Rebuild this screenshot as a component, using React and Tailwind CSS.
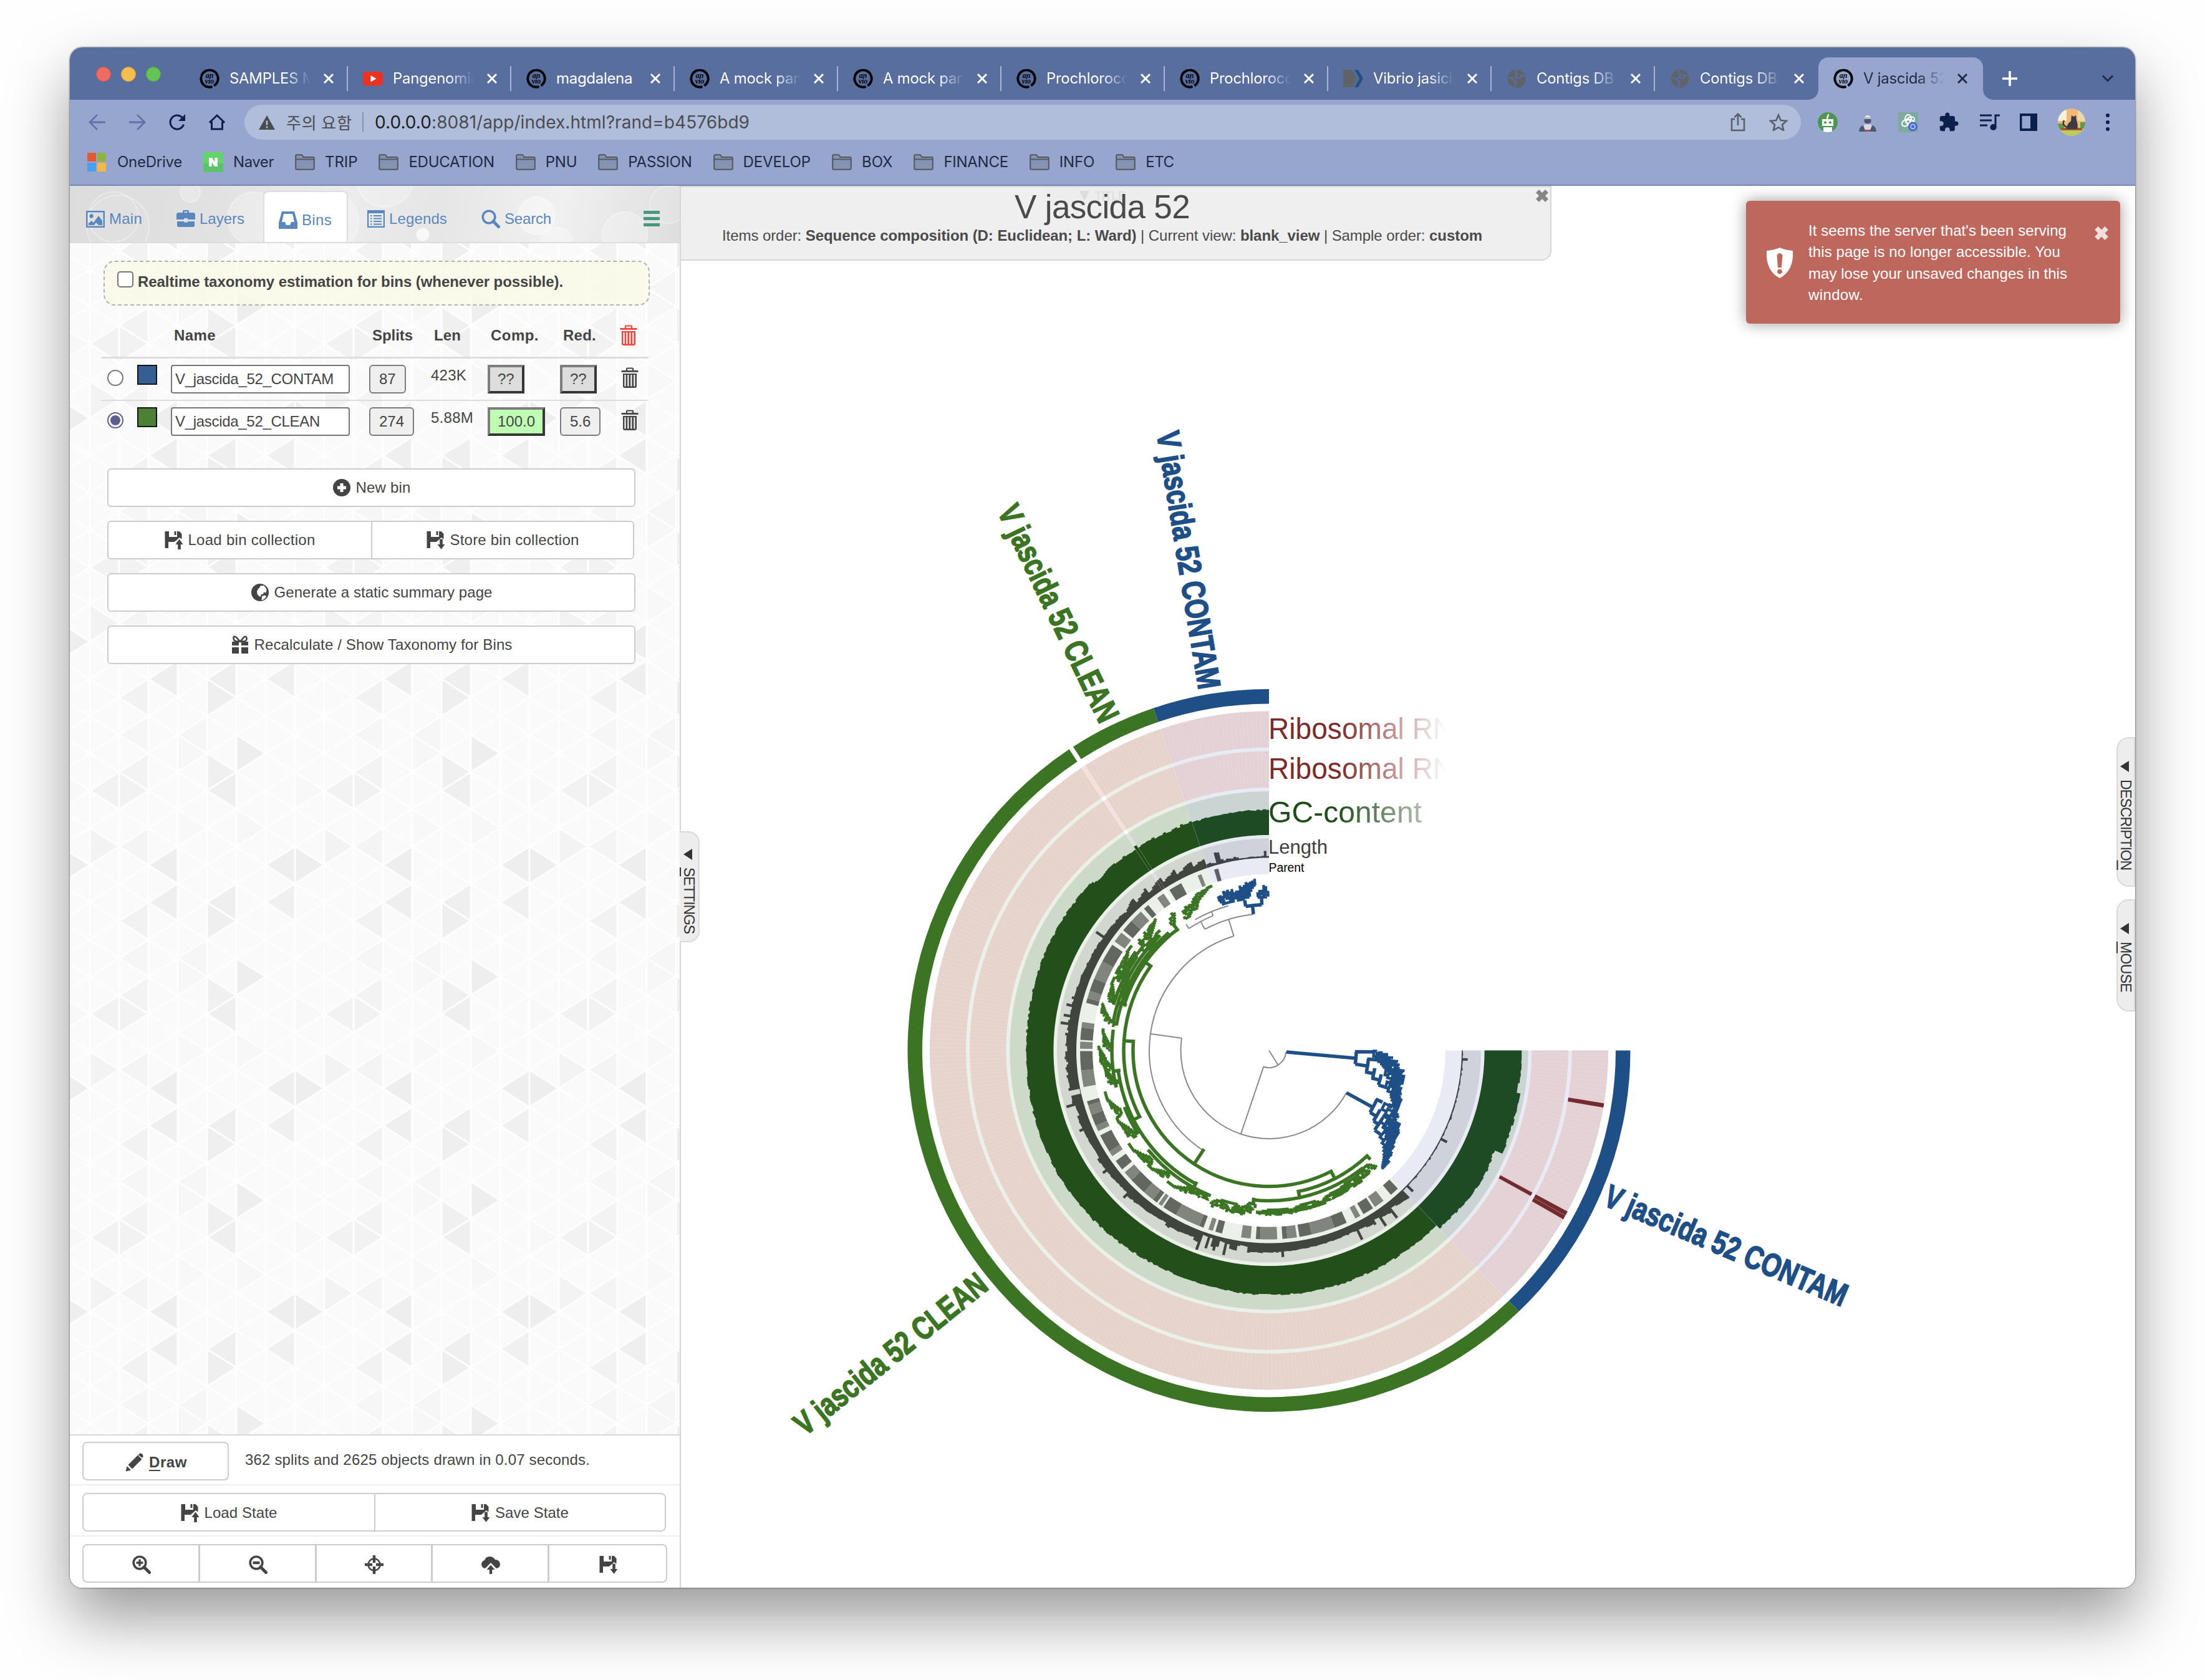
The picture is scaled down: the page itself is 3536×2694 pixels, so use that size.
import React, { useLayoutEffect, useRef } from "react";

/* Text whose letter spacing is computed so that it fills a given width */
function Fit({ w, className = "", children }) {
  const ref = useRef(null);
  useLayoutEffect(() => {
    const el = ref.current;
    el.style.letterSpacing = "0px";
    const n = el.textContent.length;
    const natural = el.getBoundingClientRect().width;
    el.style.letterSpacing = (w - natural) / n + "px";
  }, [w]);
  return (
    <span ref={ref} className={"inline-block whitespace-pre " + className}>
      {children}
    </span>
  );
}

/* ---------- icons ---------- */
const Svg = ({ children, className = "w-[30px] h-[30px]", vb = "0 0 30 30" }) => (
  <svg viewBox={vb} className={"shrink-0 " + className} fill="currentColor">
    {children}
  </svg>
);
const IcPicture = () => (
  <Svg>
    <path fillRule="evenodd" d="M0 2h30v27H0zM2.5 4.5v22h25v-22z" />
    <circle cx="8.5" cy="10.5" r="3.2" />
    <path d="M4 25v-3l5-4 3 3 8-11 6 8v7h-6l-4-4-3 4z" />
  </Svg>
);
const IcBriefcase = () => (
  <Svg>
    <path fillRule="evenodd" d="M10 5V2.5Q10 1 11.500 1h7Q20 1 20 2.500V5h7.500Q30 5.500 30 8v8H18v-2h-6v2H0V8q0-2.500 2.500-3zM12.500 5h5V3.200h-5zM1 19h11v1.500h6V19h11v7q0 2-2.500 2h-23Q1 28 1 26z" />
  </Svg>
);
const IcInbox = () => (
  <Svg>
    <path fillRule="evenodd" d="M5 1h20l5 18v10H0V19zM8 5L5 18h5l2 5h6l2-5h5L22 5z" />
  </Svg>
);
const IcList = () => (
  <Svg className="w-[28px] h-[30px]" vb="0 0 28 30">
    <path fillRule="evenodd" d="M0 1h28v28H0zM2.200 6v20.800h23.600V6z" />
    <path d="M5 9h2.500v2H5zM10 9h13v2H10zM5 13.500h2.500v2H5zM10 13.500h13v2H10zM5 18h2.500v2H5zM10 18h13v2H10zM5 22.500h2.500v2H5zM10 22.500h13v2H10z" />
  </Svg>
);
const Lens = ({ children }) => (
  <Svg>
    <circle cx="12" cy="12" r="9.800" fill="none" stroke="currentColor" strokeWidth="3.600" />
    <path d="M19 19l8.500 8.500" stroke="currentColor" strokeWidth="5" strokeLinecap="square" fill="none" />
    {children}
  </Svg>
);
const IcTrash = () => (
  <Svg className="w-[28px] h-[34px]" vb="0 0 28 34">
    <path d="M9 5V2.500Q9 1.500 10 1.500h8Q19 1.500 19 2.500V5" fill="none" stroke="currentColor" strokeWidth="2.200" />
    <path d="M0.500 5h27v2.800H0.500z" />
    <path fillRule="evenodd" d="M3 10h22v20q0 3-3 3H6q-3 0-3-3zM5.400 12v18.500h2.200V12zM10.200 12v18.500h2.200V12zM15.200 12v18.500h2.200V12zM20.200 12v18.500h2.200V12z" />
  </Svg>
);
const IcPlus = () => (
  <Svg>
    <path fillRule="evenodd" d="M15 1a14 14 0 1 0 0 28a14 14 0 1 0 0-28zM12.500 8h5v4.500H22v5h-4.500V22h-5v-4.500H8v-5h4.500z" />
  </Svg>
);
const IcFloppy = ({ down }) => (
  <Svg>
    <path fillRule="evenodd" d="M0.500 1H7v9h13V1h3.500l4 4v8.500l-4-2.500-3.500 3.500-4.500 3.500H6v10H0.500z" />
    <path d="M15.500 1h3v6h-3z" />
    {down ? <path d="M21.200 13.500h4.600V22h3.700l-6 7.800-6-7.800h3.700z" /> : <path d="M21.200 30h4.600v-8h3.700l-6-8.500-6 8.500h3.700z" />}
  </Svg>
);
const IcGlobe = () => (
  <Svg>
    <path fillRule="evenodd" d="M15 1a14 14 0 1 0 0 28a14 14 0 1 0 0-28zM16 4l3.500.5 1-1 3 3 2 4-.5 4-1.500 1-2-1-1.500 3-3.500 1-.5 3-2 0-3-3-1-5 2-4 2-2zM18 21l5-1.500 2 2-3.500 4.500-4 1.500z" />
  </Svg>
);
const IcGift = () => (
  <Svg>
    <path d="M2 10h11v6H2zM17 10h11v6H17zM2 19h11v10H2zM17 19h11v10H17z" />
    <path d="M15 10L9 3Q4 0 4.500 4.500T9 9.500h12q5-.5 4.500-5T21 3z" fill="none" stroke="currentColor" strokeWidth="2.600" />
  </Svg>
);
const IcPencil = () => (
  <Svg>
    <path d="M0.500 29.500l2-8.500 6.500 6.500zM4.500 19L20 3.500l6.500 6.500L11 25.500zM22 1.800q2.500-2.500 5 0t1 5l-1 1L20.500 3z" />
  </Svg>
);
const IcScreenshot = () => (
  <Svg>
    <circle cx="15" cy="15" r="9.500" fill="none" stroke="currentColor" strokeWidth="2.400" />
    <path d="M12.800 0h4.400v12h-4.400zM12.800 18h4.400v12h-4.400zM0 12.800h12v4.400H0zM18 12.800h12v4.400H18z" />
  </Svg>
);
const IcCloud = () => (
  <Svg>
    <path d="M6 21q-6-1-6-7 1-5 5-6Q7 2 13 2t9 5q7 0 8 7 0 6-6 7l-9-9z" />
    <path d="M12.800 31v-8H8.500l6.500-7.500 6.500 7.500h-4.300v8z" />
  </Svg>
);
const IcShield = () => (
  <Svg className="w-[46px] h-[50px]" vb="0 0 46 50">
    <path fillRule="evenodd" d="M23 0q8 4 21 5 2 32-21 44Q0 37 2 5 15 4 23 0zM18.500 12l1.500 20h6l1.500-20q-4.500-6-9 0zM23 34.500a4 4 0 1 0 .01 0z" />
  </Svg>
);
const FatX = ({ className }) => (
  <Svg className={className} vb="0 0 22 22">
    <path d="M3.500 3.500l15 15M18.500 3.500l-15 15" stroke="currentColor" strokeWidth="7" fill="none" />
  </Svg>
);

/* ---------- browser chrome ---------- */
const AnvioIcon = () => (
  <svg viewBox="0 0 32 32" className="h-8 w-8 shrink-0">
    <ellipse cx="16" cy="16" rx="13.500" ry="13.500" fill="none" stroke="#060606" strokeWidth="3.600" strokeDasharray="72 3 9 2" transform="rotate(110 16 16)" />
    <ellipse cx="16" cy="16" rx="15" ry="15" fill="none" stroke="#060606" strokeWidth="1.200" strokeDasharray="14 5 30 3" />
    <text x="16" y="15" textAnchor="middle" fontSize="12" fontWeight="bold" fontStyle="italic" fontFamily="Liberation Serif, serif" fill="#060606">an</text>
    <text x="16" y="24" textAnchor="middle" fontSize="12" fontWeight="bold" fontStyle="italic" fontFamily="Liberation Serif, serif" fill="#060606">vio</text>
  </svg>
);
const YtIcon = () => (
  <svg viewBox="0 0 32 32" className="h-8 w-8 shrink-0">
    <rect y="5" width="32" height="22.500" rx="5" fill="#ea3223" />
    <path d="M12.500 11l9 5.200-9 5.200z" fill="#fff" />
  </svg>
);
const VibIcon = () => (
  <svg viewBox="0 0 32 32" className="h-8 w-8 shrink-0">
    <path d="M0 2h15l8 14-8 14H0z" fill="#5f6368" />
    <path d="M18 2h6l8 14-8 14h-6l8-14z" fill="#20508a" />
  </svg>
);
const GlobeIcon = () => (
  <svg viewBox="0 0 32 32" className="h-8 w-8 shrink-0">
    <circle cx="16" cy="16" r="14.500" fill="#5f6368" />
    <path d="M3 15q5-1 8 2l1 3 3 0 0 4-2 5M15 3q-2 4 1 5t-1 4 3 3 5-3 6 0" fill="none" stroke="#586e9f" strokeWidth="2.600" />
  </svg>
);
const tabs = [
  [AnvioIcon, "SAMPLES M", true],
  [YtIcon, "Pangenomic", true],
  [AnvioIcon, "magdalena", false],
  [AnvioIcon, "A mock pan", true],
  [AnvioIcon, "A mock pan", true],
  [AnvioIcon, "Prochloroco", true],
  [AnvioIcon, "Prochloroco", true],
  [VibIcon, "Vibrio jasicid", true],
  [GlobeIcon, "Contigs DB", true],
  [GlobeIcon, "Contigs DB", true],
];
const CloseX = () => (
  <svg viewBox="0 0 16 16" className="h-4 w-4 shrink-0">
    <path d="M1 1l14 14M15 1L1 15" stroke="currentColor" strokeWidth="3" />
  </svg>
);
function TabStrip() {
  return (
    <div className="flex h-[84px] items-end bg-[#586e9f] text-[24px] text-white">
      <div className="flex h-[84px] w-[184px] items-center gap-4 pl-[42px] pt-[2px]">
        <div className="h-6 w-6 rounded-full border border-[#d3544b] bg-[#ed6b5f]" />
        <div className="h-6 w-6 rounded-full border border-[#d9a13c] bg-[#f5bf4f]" />
        <div className="h-6 w-6 rounded-full border border-[#51a73d] bg-[#62c554]" />
      </div>
      {tabs.map(([Icon, label, fade], i) => (
        <div key={i} className="flex h-[68px] w-[262px] shrink-0 items-center pl-6">
          <Icon />
          <div className={"ml-4 w-[130px] overflow-hidden whitespace-nowrap leading-[34px] tracking-[-0.3px] " + (fade ? "[mask-image:linear-gradient(to_right,#000_68%,transparent_100%)]" : "")}>
            {label}
          </div>
          <div className="ml-[21px]"><CloseX /></div>
          {i < 9 && <div className="ml-auto h-10 w-[2px] bg-[#a9b5d0]" />}
        </div>
      ))}
      <div className="relative flex h-[68px] w-[264px] shrink-0 items-center rounded-t-[16px] bg-[#96a6cf] pl-6 text-[#1f2a44]">
        <div className="absolute -left-4 bottom-0 h-4 w-4 bg-[radial-gradient(circle_at_0_0,#586e9f_15.5px,#96a6cf_16px)]" />
        <div className="absolute -right-4 bottom-0 h-4 w-4 bg-[radial-gradient(circle_at_100%_0,#586e9f_15.5px,#96a6cf_16px)]" />
        <AnvioIcon />
        <div className="ml-4 w-[130px] overflow-hidden whitespace-nowrap leading-[34px] tracking-[-0.3px] [mask-image:linear-gradient(to_right,#000_68%,transparent_100%)]">V jascida 52</div>
        <div className="ml-[21px]"><CloseX /></div>
      </div>
      <div className="flex h-[68px] flex-1 items-center justify-between pl-[31px] pr-[34px]">
        <svg viewBox="0 0 24 24" className="h-6 w-6"><path d="M12 0v24M0 12h24" stroke="#fff" strokeWidth="3.600" /></svg>
        <svg viewBox="0 0 20 12" className="h-3 w-5"><path d="M2 1.500l8 8 8-8" fill="none" stroke="#1f2a44" strokeWidth="3" /></svg>
      </div>
    </div>
  );
}

function Toolbar() {
  return (
    <div className="flex h-[72px] items-center bg-[#96a6cf] text-[#0b1f4b]">
      <div className="flex w-[280px] items-center gap-9 pl-[30px]">
        <svg viewBox="0 0 28 28" className="h-7 w-7" fill="none" stroke="#5f72a5" strokeWidth="2.800"><path d="M27 14H2M14 2L2 14l12 12" /></svg>
        <svg viewBox="0 0 28 28" className="h-7 w-7" fill="none" stroke="#5f72a5" strokeWidth="2.800"><path d="M1 14h25M14 2l12 12-12 12" /></svg>
        <svg viewBox="0 0 28 28" className="h-7 w-7" fill="none" stroke="currentColor" strokeWidth="3"><path d="M24.500 17.500A11 11 0 1 1 22 6.500" /><path d="M27 1v11H16z" fill="currentColor" stroke="none" /></svg>
        <svg viewBox="0 0 28 28" className="h-7 w-7" fill="none" stroke="currentColor" strokeWidth="3"><path d="M5.500 13v12h17V13M2 14.500L14 3l12 11.500M2 14h4M22 14h4" /></svg>
      </div>
      <div className="flex h-[56px] w-[2496px] items-center rounded-full bg-[#b1bedb] text-[28px] text-[#4a4c50]">
        <svg viewBox="0 0 26 23" className="ml-[23px] h-[23px] w-[26px]"><path d="M13 0l13 23H0z" fill="#4a4c50" /><path d="M13 8.500v7M13 17.500v3" stroke="#b1bedb" strokeWidth="2.600" /></svg>
        <Fit w={106} className="ml-[18px] font-['Noto_Sans_CJK_KR',sans-serif] text-[26px] leading-[56px]">주의 요함</Fit>
        <div className="ml-4 h-8 w-[2px] bg-[#8792ac]" />
        <Fit w={601} className="ml-[18px] leading-[56px]"><span className="text-[#1c1d20]">0.0.0.0</span>:8081/app/index.html?rand=b4576bd9</Fit>
        <div className="ml-auto flex items-center gap-9 pr-[21px] text-[#5a5e66]">
          <svg viewBox="0 0 28 30" className="h-[30px] w-7" fill="none" stroke="currentColor" strokeWidth="2.600"><path d="M9 10H4v18h20V10h-5M14 20V2M8.500 7L14 1.800 19.500 7" /></svg>
          <svg viewBox="0 0 30 28" className="h-7 w-[30px]" fill="none" stroke="currentColor" strokeWidth="2.600"><path d="M15 2.500l3.700 8.500 9.300.8-7 6.100 2.100 9.100L15 22.200 6.900 27 9 17.900l-7-6.100 9.300-.8z" /></svg>
        </div>
      </div>
      <div className="flex flex-1 items-center justify-between pl-[27px] pr-[40px]">
        <svg viewBox="0 0 32 32" className="h-8 w-8"><circle cx="16" cy="16" r="16" fill="#4f9552" /><path d="M7 11h18v11H7zM14 11q0-7 4-9 0 5-2 9zM9 24h14v7q-7 2-14 0z" fill="#fff" /><circle cx="12" cy="16.500" r="2" fill="#4f9552" /><circle cx="20" cy="16.500" r="2" fill="#4f9552" /></svg>
        <svg viewBox="0 0 32 32" className="h-8 w-8"><path d="M2 31q1-9 7-10h14q6 1 7 10z" fill="#4b5670" /><path d="M9 21q7-5 14 0l-3 8h-8z" fill="#d5dae4" /><ellipse cx="16" cy="12" rx="6" ry="7.500" fill="#aeb6c8" /><path d="M10.500 11h11v5q-5.500 5-11 0z" fill="#4d5670" /><path d="M11 8q5-6 10 0z" fill="#e8ebf2" /><path d="M12 28h8v3h-8z" fill="#b34a4a" /></svg>
        <svg viewBox="0 0 32 32" className="h-8 w-8"><rect width="32" height="32" rx="3" fill="#7fab9c" /><g fill="none" stroke="#fff" strokeWidth="2"><ellipse cx="16" cy="11" rx="5" ry="7" /><ellipse cx="16" cy="11" rx="5" ry="7" transform="rotate(60 16 15)" /><ellipse cx="16" cy="11" rx="5" ry="7" transform="rotate(120 16 15)" /><ellipse cx="16" cy="11" rx="5" ry="7" transform="rotate(240 16 15)" /></g><circle cx="23.500" cy="23" r="7.500" fill="#4d66d8" /><circle cx="23.500" cy="23" r="3.500" fill="none" stroke="#cdd6ff" strokeWidth="1.500" /></svg>
        <svg viewBox="0 0 24 24" className="h-[34px] w-[34px]" fill="currentColor"><path d="M20.500 11H19V7c0-1.100-.9-2-2-2h-4V3.500C13 2.120 11.880 1 10.500 1S8 2.120 8 3.500V5H4c-1.100 0-1.990.9-1.990 2v3.800H3.500c1.490 0 2.700 1.210 2.700 2.700s-1.210 2.700-2.700 2.700H2V20c0 1.100.9 2 2 2h3.800v-1.500c0-1.490 1.210-2.700 2.700-2.700s2.700 1.210 2.700 2.700V22H17c1.100 0 2-.9 2-2v-4h1.500c1.380 0 2.500-1.120 2.500-2.500S21.880 11 20.500 11z" /></svg>
        <svg viewBox="0 0 32 28" className="h-7 w-8" fill="none" stroke="currentColor" strokeWidth="3"><path d="M0 3h19M0 11h19M0 19h12M25 22V3h7" /><circle cx="21.500" cy="22" r="3.600" fill="currentColor" /></svg>
        <svg viewBox="0 0 28 28" className="h-7 w-7" fill="currentColor"><path fillRule="evenodd" d="M0 0h28v28H0zM3.500 4v20H17V4z" /></svg>
        <svg viewBox="0 0 44 44" className="h-11 w-11"><defs><clipPath id="av"><circle cx="22" cy="22" r="22" /></clipPath></defs><g clipPath="url(#av)"><path d="M0 0h44v44H0z" fill="#f1b877" /><path d="M0 0h14v20H0z" fill="#f7f1dc" /><path d="M32 2h12v18H32z" fill="#e9d8a8" /><path d="M0 32h44v12H0z" fill="#bccb62" /><path d="M0 24h10v10H0zM36 22h8v10h-8z" fill="#5e9c4a" /><path d="M5 31h34v4H5z" fill="#a8562b" /><path d="M14 33q0-8 7-13l1-9 3 2 4-2 1 8q3 8 1 14z" fill="#3c3b43" /><path d="M15 30q-9-3-5-11" fill="none" stroke="#3c3b43" strokeWidth="2.500" /></g></svg>
        <svg viewBox="0 0 8 28" className="h-7 w-2" fill="currentColor"><circle cx="4" cy="3" r="3" /><circle cx="4" cy="14" r="3" /><circle cx="4" cy="25" r="3" /></svg>
      </div>
    </div>
  );
}

const Folder = () => (
  <svg viewBox="0 0 32 26" className="h-[26px] w-8 shrink-0"><path d="M1.200 23V3q0-1.800 2-1.800h7q1.500 0 2 1.500l1 2.300h15.600q2 0 2 2v16q0 1.800-2 1.800H3.200q-2 0-2-1.800z" fill="#8493b3" stroke="#55575a" strokeWidth="2" /><path d="M1 8.500h30" stroke="#55575a" strokeWidth="1.800" /></svg>
);
const bookmarks = [
  ["TRIP", 53], ["EDUCATION", 138], ["PNU", 51], ["PASSION", 103], ["DEVELOP", 109], ["BOX", 50], ["FINANCE", 104], ["INFO", 57], ["ETC", 46],
];
function Bookmarks() {
  return (
    <div className="flex h-[66px] items-start border-b-2 border-[#7287b6] bg-[#96a6cf] text-[24px] text-[#1f2a44]">
      <div className="flex h-[56px] items-center pl-7">
        <svg viewBox="0 0 30 30" className="h-[30px] w-[30px]"><path d="M0 0h14v14H0z" fill="#e25a33" /><path d="M16 0h14v14H16z" fill="#8cb53c" /><path d="M0 16h14v14H0z" fill="#4b9fe8" /><path d="M16 16h14v14H16z" fill="#f4b944" /></svg>
        <Fit w={104} className="ml-[18px]">OneDrive</Fit>
        <svg viewBox="0 0 32 32" className="ml-[34px] h-8 w-8"><rect width="32" height="32" fill="#62d56a" /><rect y="18" width="32" height="14" fill="#56b96c" opacity=".6" /><path d="M9 23V9h5l4.500 7V9H23v14h-5l-4.500-7v7z" fill="#fff" /></svg>
        <Fit w={65} className="ml-4">Naver</Fit>
      </div>
      {bookmarks.map(([t, w]) => (
        <div key={t} className="flex h-[56px] items-center pl-[34px]">
          <Folder />
          <Fit w={w - 0.6} className="ml-4">{t}</Fit>
        </div>
      ))}
    </div>
  );
}

/* ---------- settings panel ---------- */
/* triangles on a half-height grid: [apex column, apex row, direction, fill] */
const HX = 47, HY = 29.85;
const tris = [
  [1, 7, 1, "#f3f3f3"], [1, 7, -1, "#f4f4f4"], [0, 4, -1, "#f2f2f2"], [2, 4, 1, "#f2f2f2"], [1, 3, -1, "#f3f3f3"], [5, 3, 1, "#f0f0f0"], [4, 4, -1, "#efefef"],
  [6, 2, 1, "#eeeeee"], [2, 8, -1, "#eeeeee"], [6, 8, -1, "#eeeeee"], [8, 8, 1, "#eeeeee"], [2, 10, -1, "#efefef"], [4, 10, -1, "#efefef"], [6, 10, -1, "#f0f0f0"],
  [5, 11, 1, "#efefef"], [1, 11, -1, "#f2f2f2"], [1, 1, -1, "#f6f6f6"], [3, 1, -1, "#f6f6f6"], [4, 2, 1, "#f7f7f7"], [6, 6, 1, "#f7f7f7"], [4, 6, 1, "#f8f8f8"], [8, 4, 1, "#f8f8f8"],
];
const PanelPattern = () => {
  let lines = "";
  for (let c = 0; c <= 8; c++) lines += `M${c * HX} 0V${12 * HY}`;
  for (let r = -8; r <= 12; r += 2) lines += `M0 ${r * HY}L${8 * HX} ${(r + 8) * HY}M0 ${(r + 8) * HY}L${8 * HX} ${r * HY}`;
  return (
    <svg className="absolute inset-0 h-full w-full">
      <defs>
        <pattern id="tri" x="32" y="42" width={8 * HX} height={12 * HY} patternUnits="userSpaceOnUse">
          <rect width={8 * HX} height={12 * HY} fill="#fafafa" />
          {tris.map(([c, r, d, f], i) => (
            <path key={i} fill={f} d={`M${c * HX} ${r * HY}L${(c - d) * HX} ${(r - 1) * HY}V${(r + 1) * HY}z`} />
          ))}
          <path d={lines} stroke="#fefefe" strokeWidth="3" fill="none" />
        </pattern>
      </defs>
      <rect width="100%" height="100%" fill="url(#tri)" />
    </svg>
  );
};
const Btn = ({ children, className = "" }) => (
  <div className={"flex items-center justify-center gap-2 border-[#ccc] bg-white " + className}>{children}</div>
);
const NavItem = ({ Icon, t, w, className = "" }) => (
  <div className={"flex items-center gap-[7px] " + className}>
    <Icon />
    <Fit w={w}>{t}</Fit>
  </div>
);

function BinRow({ on, color, name, nw, splits, len, lw, comp, red }) {
  return (
    <div className="grid h-[66px] grid-cols-[58px_54px_318px_99px_91px_116px_98px_44px] items-start pt-[10px]">
      <div className={"ml-[10px] mt-2 flex h-[26px] w-[26px] items-center justify-center rounded-full border-2 bg-white " + (on ? "border-[#5b5f8d]" : "border-[#767676]")}>
        {on && <div className="h-4 w-4 rounded-full bg-[#5b5f8d]" />}
      </div>
      <div className={"h-8 w-8 border-2 border-[#141414] " + color} />
      <div className="flex h-[46px] w-[287px] items-center rounded-[4px] border-2 border-[#767676] bg-white pl-[5px]"><Fit w={nw}>{name}</Fit></div>
      <div><div className="inline-flex h-[46px] items-center rounded-[6px] border-2 border-[#7b7b7b] bg-[#efefef] px-[14px]">{splits}</div></div>
      <div className="h-[34px] leading-[34px]"><Fit w={lw}>{len}</Fit></div>
      <div>{comp}</div>
      <div>{red}</div>
      <div className="mt-[4px]"><IcTrash /></div>
    </div>
  );
}
const Outset = ({ t, className }) => (
  <div className={"inline-flex h-[46px] items-center border-4 border-b-[#363636] border-l-[#7d7d7d] border-r-[#363636] border-t-[#7d7d7d] px-[12px] " + className}>{t}</div>
);

function SettingsPanel() {
  return (
    <div className="flex w-[980px] shrink-0 flex-col border-r-2 border-[#d6d6d6] text-[24px] text-[#444]">
      <div className="relative flex h-[92px] items-end overflow-hidden border-b-2 border-[#dcdcdc] bg-[linear-gradient(100deg,#dcdcdc,#e2e2e2_25%,#ececec_45%,#e6e6e6_60%,#f0f0f0_80%,#dedede)] text-[#5a88bd]">
        <svg viewBox="0 0 978 90" className="absolute inset-0 h-full w-full">
          <g fill="#fff" fillOpacity=".26" stroke="#fff" strokeOpacity=".35" strokeWidth="2">
            <circle cx="77" cy="65" r="50" fillOpacity=".06" /><circle cx="70" cy="50" r="40" fillOpacity=".05" />
            <circle cx="193" cy="10" r="16" /><circle cx="295" cy="52" r="42" /><circle cx="413" cy="58" r="50" /><circle cx="505" cy="-12" r="46" fillOpacity=".2" />
            <circle cx="748" cy="48" r="30" fillOpacity=".4" /><circle cx="780" cy="92" r="26" /><circle cx="890" cy="78" r="36" /><circle cx="566" cy="78" r="10" fillOpacity=".7" /><circle cx="960" cy="30" r="30" fillOpacity=".1" />
          </g>
        </svg>
        <div className="relative flex h-[82px] w-full items-center [&>div]:pt-[7px]">
          <NavItem Icon={IcPicture} t="Main" w={53} className="w-[171px] pl-[26px]" />
          <NavItem Icon={IcBriefcase} t="Layers" w={72} className="w-[139px]" />
          <NavItem Icon={IcInbox} t="Bins" w={48} className="h-[84px] w-[136px] shrink-0 self-start rounded-t-[8px] border-x-2 border-t-2 border-[#ddd] bg-white pl-[23px]" />
          <NavItem Icon={IcList} t="Legends" w={93} className="w-[214px] pl-[31px]" />
          <NavItem Icon={Lens} t="Search" w={75} />
          <div className="ml-auto mr-[32px] flex flex-col gap-[5px]">
            {[0, 1, 2].map((i) => <div key={i} className="h-[5px] w-[26px] bg-[#479680]" />)}
          </div>
        </div>
      </div>
      <div className="relative min-h-0 flex-1">
        <PanelPattern />
        <div className="relative pl-[50px] pt-7">
          <div className="ml-1 flex h-[72px] w-[876px] items-start rounded-[18px] border-2 border-dashed border-[#b3b3b3] bg-[#fafae6]/80 pl-5">
            <div className="mt-[15px] h-[26px] w-[26px] rounded-[5px] border-2 border-[#767676] bg-white" />
            <Fit w={682} className="ml-[7px] mt-[15px] font-bold leading-[34px]">Realtime taxonomy estimation for bins (whenever possible).</Fit>
          </div>
          <div className="mt-[14px] w-[878px]">
            <div className="grid h-[71px] grid-cols-[58px_54px_318px_99px_91px_116px_96px_46px] items-center border-b-[3px] border-[#ddd] font-bold">
              <div /><div />
              <Fit w={67} className="ml-[5px] justify-self-start">Name</Fit>
              <Fit w={65} className="ml-[5px] justify-self-start">Splits</Fit>
              <Fit w={43} className="ml-[5px] justify-self-start">Len</Fit>
              <Fit w={77} className="ml-[5px] justify-self-start">Comp.</Fit>
              <Fit w={53} className="ml-[5px] justify-self-start">Red.</Fit>
              <div className="text-[#f0453a]"><IcTrash /></div>
            </div>
            <BinRow color="bg-[#355f93]" name="V_jascida_52_CONTAM" nw={254} splits="87" len="423K" lw={57}
              comp={<Outset t="??" className="bg-[#ddd]" />} red={<Outset t="??" className="bg-[#ddd]" />} />
            <div className="h-[2px] bg-[#ddd]" />
            <BinRow on color="bg-[#4c8035]" name="V_jascida_52_CLEAN" nw={232} splits="274" len="5.88M" lw={68}
              comp={<Outset t="100.0" className="bg-[#bfffb4]" />}
              red={<div className="inline-flex h-[46px] items-center rounded-[6px] border-2 border-[#7b7b7b] bg-[#efefef] px-[14px]">5.6</div>} />
          </div>
          <div className="ml-[10px] mt-[42px] flex flex-col gap-[22px]">
            <Btn className="h-[62px] w-[847px] rounded-[6px] border-2"><IcPlus /><Fit w={88}>New bin</Fit></Btn>
            <div className="flex h-[62px] w-[845px] rounded-[6px] border-2 border-[#ccc] bg-white">
              <Btn className="w-[423px] rounded-l-[6px] border-r-2"><IcFloppy /><Fit w={204}>Load bin collection</Fit></Btn>
              <Btn className="flex-1 rounded-r-[6px]"><IcFloppy down /><Fit w={207}>Store bin collection</Fit></Btn>
            </div>
            <Btn className="h-[62px] w-[847px] rounded-[6px] border-2"><IcGlobe /><Fit w={350}>Generate a static summary page</Fit></Btn>
            <Btn className="h-[62px] w-[847px] rounded-[6px] border-2"><IcGift /><Fit w={414}>Recalculate / Show Taxonomy for Bins</Fit></Btn>
          </div>
        </div>
      </div>
      <div className="h-[246px] border-t-2 border-[#d8d8d8] bg-white">
        <div className="flex h-[80px] items-start border-b-2 border-[#eee] pl-5 pt-[10px]">
          <Btn className="h-[62px] w-[235px] rounded-[8px] border-2 pl-[2px] pt-[4px] font-bold"><IcPencil /><Fit w={61}><span className="underline decoration-2 underline-offset-4">D</span>raw</Fit></Btn>
          <Fit w={553} className="ml-[26px] leading-[57px]">362 splits and 2625 objects drawn in 0.07 seconds.</Fit>
        </div>
        <div className="h-[82px] border-b-2 border-[#eee] pl-5 pt-3">
          <div className="flex h-[62px] w-[936px] rounded-[8px] border-2 border-[#ccc]">
            <Btn className="w-[468px] rounded-l-[6px] border-r-2 pt-[2px]"><IcFloppy /><Fit w={117}>Load State</Fit></Btn>
            <Btn className="flex-1 rounded-r-[6px] pt-[2px]"><IcFloppy down /><Fit w={118}>Save State</Fit></Btn>
          </div>
        </div>
        <div className="pl-5 pt-3">
          <div className="grid h-[62px] w-[938px] grid-cols-5 divide-x-[3px] divide-[#ccc] rounded-[8px] border-2 border-[#ccc] [&>div]:flex [&>div]:items-center [&>div]:justify-center [&>div]:pl-[2px] [&>div]:pt-1">
            <div><Lens><path d="M10.300 6.500h3.400v3.800h3.800v3.400h-3.800v3.800h-3.400v-3.800H6.500v-3.400h3.800z" /></Lens></div>
            <div><Lens><path d="M6.500 9.800h11v4.400h-11z" /></Lens></div>
            <div><IcScreenshot /></div>
            <div><IcCloud /></div>
            <div><IcFloppy down /></div>
          </div>
        </div>
      </div>
    </div>
  );
}

/* ---------- circular phylogram ---------- */
const CX = 2035, CY = 1684.5;
const LEAVES = 362, STEP = 270 / LEAVES;
const BLUE = "#1f4f87", GREEN = "#3b7523";
const rad = (d) => (d * Math.PI) / 180;
const P = (r, d) => (CX + r * Math.cos(rad(d))).toFixed(2) + " " + (CY + r * Math.sin(rad(d))).toFixed(2);
const sector = (r0, r1, a0, a1) => {
  const big = a1 - a0 > 180 ? 1 : 0;
  return `M${P(r0, a0)}L${P(r1, a0)}A${r1} ${r1} 0 ${big} 1 ${P(r1, a1)}L${P(r0, a1)}A${r0} ${r0} 0 ${big} 0 ${P(r0, a0)}Z`;
};
const arc = (r, a0, a1) => `M${P(r, a0)}A${r} ${r} 0 ${a1 - a0 > 180 ? 1 : 0} 1 ${P(r, a1)}`;
const ray = (a, r0, r1) => `M${P(r0, a)}L${P(r1, a)}`;
function rng(seed) {
  let s = seed;
  return () => {
    s = (s * 1664525 + 1013904223) % 4294967296;
    return s / 4294967296;
  };
}

const A1 = 62 * STEP, A2 = 317 * STEP, A3 = 318 * STEP, A4 = 337 * STEP;
const groups = [
  { a: 0, b: A1, from: 0, to: 62, bg: "#e8ebf3", rib: "#e3d1d5", gcBg: "#cad4d3", gc: "#1f4b24", lenBg: "#cfd2db", len: "#3f424b", ring: BLUE },
  { a: A1, b: A2, from: 62, to: 317, bg: "#ebf0e8", rib: "#e6d4cc", gcBg: "#cedac9", gc: "#224f1a", lenBg: "#d2d7d0", len: "#40453d", ring: GREEN },
  { a: A2, b: A3, from: 317, to: 318, bg: "#ffffff", rib: "#f8dfdf", gcBg: "#dde2dd", gc: "#1d4a14", lenBg: "#e2dfe2", len: "#40403f", ring: null },
  { a: A3, b: A4, from: 318, to: 337, bg: "#ebf0e8", rib: "#e6d4cc", gcBg: "#cedac9", gc: "#224f1a", lenBg: "#d2d7d0", len: "#40453d", ring: GREEN },
  { a: A4, b: 270, from: 337, to: 362, bg: "#e8ebf3", rib: "#e3d1d5", gcBg: "#cad4d3", gc: "#1f4b24", lenBg: "#cfd2db", len: "#3f424b", ring: BLUE },
];

const gcRand = rng(11);
const gcVals = Array.from({ length: LEAVES }, (_, i) => {
  const n = gcRand();
  if (i < 10) return 405 + n;
  if (i < 15) return i < 13 ? 403 : 409;
  if (i < 32) return 407 + n * 3;
  if (i < 62) return 394 + Math.min(4, (i - 32) * 0.8) - Math.max(0, i - 48) * 0.35 + n * 2.5;
  if (i < 300) return 389.500 + n * 2.500 + 1.500 * Math.sin(i / 14);
  if (i < 317) return 386 + n * 4;
  if (i === 317) return 392;
  if (i < 337) return 385 + n * 4;
  return 385 + n * 2;
});
const lenSpikes = { 3: 319, 7: 312, 36: 321, 59: 323, 70: 338, 75: 338, 85: 338, 115: 332, 137: 336, 141: 333, 144: 333, 147: 340, 160: 327, 180: 332, 192: 331, 210: 330, 220: 337, 251: 337, 254: 334, 258: 333, 287: 336, 341: 329, 342: 328, 360: 320 };
const lenRand = rng(5);
const lenVals = Array.from({ length: LEAVES }, (_, i) => {
  const n = lenRand();
  if (lenSpikes[i]) return lenSpikes[i];
  if (i < 62) return 310.500 + n * 1.200 + (i > 20 && i % 9 === 0 ? 1.5 : 0);
  if (i < 85) return 326 - ((i - 62) % 8) + n * 1.5;
  if (i < 126) return 320 + ((i - 85) / 41) * 4 + n * 1.5;
  if (i < 150) return 314 + (i % 7 < 3 ? 10 : 0) + n * 4;
  if (i === 224 || i === 225) return 310;
  if (i < 220) return 321 + ((i % 18) / 18) * 4 + n * 1.5;
  if (i < 262) return 323 + n * 5;
  if (i < 300) return 323 - ((i - 262) / 38) * 3 + n * 2;
  if (i < 337) return 317 + (((i * 2) % 13) / 13) * 10 + n * 2;
  return 311 + (i < 350 ? n * 5 : n * 1.5);
});
const bars = (vals, base, from, to) => {
  let d = `M${P(base, from * STEP)}`;
  for (let i = from; i < to; i++) d += `L${P(vals[i], i * STEP)}L${P(vals[i], (i + 1) * STEP)}`;
  d += `L${P(base, to * STEP)}`;
  for (let i = to - 1; i >= from; i--) d += `L${P(base, i * STEP)}`;
  return d + "Z";
};

/* parent contigs: start, end, dark? */
const parents = [
  [47, 49.8, 1], [52.7, 55.9, 0], [56.6, 60, 1], [61.1, 62.8, 0], [65.7, 69.7, 1], [69.7, 76.9, 0], [76.9, 80.7, 1], [81.5, 84.4, 0], [84.4, 85.9, 1],
  [87.5, 92.7, 0], [92.7, 94, 1], [95.6, 98.5, 0], [104.4, 106.5, 1], [107.3, 108.7, 0], [110.3, 111.7, 1], [111.7, 119.5, 0], [119.5, 124, 1],
  [124.6, 125.8, 0], [126.4, 127.9, 1], [127.9, 131.4, 0], [131.4, 136.7, 1], [136.7, 139.8, 0], [141, 144.2, 1], [146, 147.7, 0], [147.7, 153.3, 1],
  [154.7, 156.5, 0], [156.5, 160.1, 1], [160.1, 163.1, 0], [163.1, 164.4, 1], [168.8, 173.9, 0], [173.9, 179.8, 1], [180.5, 182.7, 0], [183.2, 187, 1],
  [187, 188.7, 0], [194.6, 196.1, 1], [196.1, 198.4, 0], [198.4, 202.4, 1], [202.4, 208.1, 0], [208.1, 214, 1], [215.2, 218.6, 0], [219.5, 223.3, 1],
  [223.3, 227.3, 0], [228.6, 230.3, 1], [233.7, 236.1, 0], [238.2, 242.3, 1], [247.8, 249, 0], [253.1, 254.4, 1],
];

/* dense subtrees are grown deterministically inside an angular wedge */
function grow(out, rand, n0, n1, r, rEnd, bias) {
  const n = n1 - n0;
  if (n <= 1) return (n0 + 0.5) * STEP;
  let k = bias ? Math.max(1, Math.round(n * (0.06 + rand() * bias))) : Math.max(1, Math.round(n * (0.2 + rand() * 0.6)));
  if (k >= n) k = n - 1;
  const room = rEnd - r;
  const share = bias ? 0.14 + rand() * 0.16 : 0.35 + rand() * 0.4;
  const step = () => Math.max(2, bias ? room * share : (room * share) / Math.max(1, Math.log2(n)));
  const ra = Math.min(rEnd, r + (k > 1 ? step() : 3 + rand() * 6));
  const rb = Math.min(rEnd, r + (n - k > 1 ? step() : 3 + rand() * 5));
  const endA = bias ? Math.min(rEnd, ra + room * 0.45 + 3) : rEnd;
  const ca = grow(out, rand, n0, n0 + k, ra, endA, bias);
  const cb = grow(out, rand, n0 + k, n1, rb, rEnd, bias);
  out.push(arc(r, ca, cb), ray(ca, r, ra), ray(cb, r, rb));
  return (ca + cb) / 2;
}
const subtree = (seed, a0, a1, r0, r1, bias) => {
  const out = [];
  grow(out, rng(seed), Math.round(a0 / STEP), Math.round(a1 / STEP), r0, r1, bias);
  return out.join("");
};
const greenTrees = [
  [3, 47, 57, 242, 256, 0], [4, 54, 64, 246, 259, 0], [5, 61, 71, 250, 260, 0], [51, 70, 82, 253, 262, 0], [6, 80, 94, 256, 263, 0],
  [7, 95, 104, 247, 266, 0.25], [71, 99, 111, 252, 268, 0], [8, 112, 120, 254, 260, 0], [9, 118, 128, 254, 266, 0.2],
  [10, 128, 137, 255, 267, 0.2], [12, 136, 147, 257, 270, 0.2], [13, 147, 157, 252, 267, 0.2], [14, 156, 166, 257, 271, 0.2], [15, 167, 174, 249, 266, 0.25], [16, 172, 182, 256, 273, 0.25],
  [17, 180, 188, 252, 268, 0.25], [18, 189, 196, 251, 278, 0.2], [19, 197, 206, 262, 274, 0.2], [20, 205, 218, 264, 277, 0.15], [21, 200, 220, 247, 262, 0.1], [22, 218, 230, 255, 278, 0.15], [221, 220, 228, 248, 260, 0.2], [23, 232, 236, 254, 274, 0.3], [24, 237.500, 245, 250, 270, 0.2], [25, 241, 251.500, 256, 279, 0.2],
];
const greenLines = [
  ray(123.4, 192, 218), arc(218, 62.8, 183.8), ray(183.8, 218, 233), arc(233, 152.9, 215.5), ray(152.9, 233, 244), arc(244, 118.8, 172.4),
  ray(215.5, 233, 243), arc(243.5, 197.6, 232.8), ray(62.8, 218, 231), arc(231, 47.1, 78.2), ray(78.2, 231, 241), arc(241, 52, 95.9), ray(47.1, 231, 236),
  ray(95.9, 240, 247), ray(118.8, 243, 254), ray(172.4, 243, 250), ray(197.6, 242, 252), ray(232.8, 243, 253), arc(251, 112.5, 140), arc(254, 190.3, 226),
  arc(252, 167, 187), arc(252, 60, 68), arc(260, 70, 94), arc(249, 148, 158), arc(248, 190, 229), arc(260, 197, 215), arc(266, 205, 216),
].join("");
const blueLines = [
  ray(5.1, 28, 140), arc(140, 0.8, 9), ray(0.8, 138, 166), ray(9, 140, 160), arc(160, 5, 12.5), ray(5, 158, 176), ray(12.5, 158, 172), arc(172, 9.5, 15), ray(15, 170, 184), arc(184, 12, 17.5), ray(17.5, 184, 194),
  ray(28.7, 141.5, 190), arc(190, 24.500, 31.500), ray(24.500, 188, 200), ray(31.500, 190, 202), arc(202, 28, 34), ray(34, 202, 212), arc(212, 31, 37), ray(37, 212, 224),
  ray(263.5, 220, 234), arc(234, 260.8, 267.2), ray(260.8, 234, 244), ray(267.2, 234, 246),
].join("");
const blueTrees = [
  [31, 0, 10, 168, 200, 0.2], [311, 3, 14, 182, 220, 0.25], [32, 9, 20, 190, 220, 0.2], [33, 14, 28.500, 196, 226, 0.12], [331, 18, 27, 210, 226, 0.2],
  [34, 24, 36, 204, 246, 0.15], [35, 29, 42, 212, 252, 0.12], [36, 34, 46.200, 226, 262, 0.15], [37, 31, 40, 222, 248, 0.2],
  [41, 251.400, 258, 246, 264, 0], [42, 258, 265.600, 246, 274, 0.3], [421, 258, 263, 248, 262, 0], [43, 265.800, 270, 246, 264, 0],
];
const grayLines = [
  ray(58, 0, 27.5), arc(27.5, 5, 109), ray(108.6, 27.5, 141.5), arc(141.5, 28.6, 188.1), ray(188, 141.5, 192), arc(192, 123.4, 252.9), ray(252.9, 192, 220),
  arc(220, 242.1, 263.5), ray(242.1, 220, 234), arc(234, 236.7, 247.5), ray(236.7, 234, 242), ray(247.5, 234, 241), arc(241, 240.6, 254.3),
].join("");
const leafEdges = Array.from({ length: LEAVES }, (_, i) => ray((i + 1) * STEP, 422, 480) + ray((i + 1) * STEP, 486, 544)).join("");

const BinLabel = ({ a, t, len, color }) => {
  const left = a > 90;
  return (
    <g transform={`translate(${CX} ${CY}) rotate(${left ? a - 180 : a})`}>
      <text x={left ? -588 : 588} y="18" textAnchor={left ? "end" : "start"} textLength={len} lengthAdjust="spacingAndGlyphs" fontSize="52" fontWeight="bold" fill={color} stroke={color} strokeWidth="1.800">{t}</text>
    </g>
  );
};

function Phylogram() {
  return (
    <svg viewBox="1092 298 2332 2248" className="block h-full w-full" fontFamily="Liberation Sans, Arial, sans-serif">
      <defs>
        <linearGradient id="fadeRed" gradientUnits="userSpaceOnUse" x1="2035" y1="0" x2="2316" y2="0">
          <stop offset=".4" stopColor="#7e2a28" /><stop offset=".85" stopColor="#7e2a28" stopOpacity=".28" /><stop offset="1" stopColor="#7e2a28" stopOpacity="0.02" />
        </linearGradient>
        <linearGradient id="fadeGreen" gradientUnits="userSpaceOnUse" x1="2035" y1="0" x2="2316" y2="0">
          <stop offset=".38" stopColor="#1f4d1a" /><stop offset="1" stopColor="#1f4d1a" stopOpacity=".2" />
        </linearGradient>
        <clipPath id="labelClip"><rect x="2035" y="1100" width="283" height="320" /></clipPath>
      </defs>
      {groups.map((g, i) => (
        <g key={i}>
          <path d={sector(283, 544, g.a, g.b)} fill={g.bg} />
          <path d={sector(309.5, 340, g.a, g.b)} fill={g.lenBg} />
          <path d={sector(345.6, 415.7, g.a, g.b)} fill={g.gcBg} />
          <path d={sector(421.5, 480, g.a, g.b)} fill={g.rib} />
          <path d={sector(486, 544, g.a, g.b)} fill={g.rib} />
          <path d={bars(lenVals, 309, g.from, g.to)} fill={g.len} />
          <path d={bars(gcVals, 345.6, g.from, g.to)} fill={g.gc} />
          {g.ring && <path d={sector(556, 579.5, g.a, g.b)} fill={g.ring} />}
        </g>
      ))}
      <path d={leafEdges} stroke="#fff" strokeOpacity=".13" strokeWidth="1" />
      <path d={sector(486, 544, 12 * STEP, 13 * STEP)} fill="#732b2e" />
      <path d={sector(486, 544, 38 * STEP, 39 * STEP)} fill="#732b2e" />
      <path d={sector(486, 544, 39 * STEP + 0.04, 40 * STEP)} fill="#732b2e" />
      <path d={sector(421.5, 480, 38 * STEP, 39 * STEP)} fill="#732b2e" />
      {parents.map(([a, b, dark], i) => (
        <path key={i} d={sector(283, 303, a, b)} fill={i === parents.length - 1 ? "#5d6069" : dark ? "#62675f" : "#80857d"} />
      ))}
      <path d={grayLines} fill="none" stroke="#8a8a8a" strokeWidth="2" />
      <g fill="none" stroke={GREEN} strokeWidth="5.500">
        <path d={greenLines} strokeLinecap="square" />
        {greenTrees.map((t, i) => <path key={i} d={subtree(...t)} strokeLinecap="butt" strokeWidth="4.800" />)}
      </g>
      <g fill="none" stroke={BLUE} strokeWidth="5">
        <path d={blueLines} strokeWidth="5.500" />
        {blueTrees.map((t, i) => <path key={i} d={subtree(...t)} strokeLinecap="square" strokeWidth="4.500" />)}
      </g>
      <BinLabel a={23.1} t="V jascida 52 CONTAM" len={418} color={BLUE} />
      <BinLabel a={141.3} t="V jascida 52 CLEAN" len={380} color={GREEN} />
      <BinLabel a={244.3} t="V jascida 52 CLEAN" len={380} color={GREEN} />
      <BinLabel a={260.7} t="V jascida 52 CONTAM" len={418} color={BLUE} />
      <g clipPath="url(#labelClip)">
        <text x="2034" y="1185" fontSize="48" fill="url(#fadeRed)" textLength="328" lengthAdjust="spacingAndGlyphs">Ribosomal RNA</text>
        <text x="2034" y="1249" fontSize="48" fill="url(#fadeRed)" textLength="328" lengthAdjust="spacingAndGlyphs">Ribosomal RNA</text>
        <text x="2034" y="1319" fontSize="48" fill="url(#fadeGreen)" textLength="246" lengthAdjust="spacingAndGlyphs">GC-content</text>
        <text x="2034" y="1369" fontSize="31" fill="#404040" textLength="95" lengthAdjust="spacingAndGlyphs">Length</text>
        <text x="2034.500" y="1398" fontSize="19.500" fill="#000" textLength="57" lengthAdjust="spacingAndGlyphs">Parent</text>
      </g>
    </svg>
  );
}

/* ---------- canvas area ---------- */
function VText({ w, children }) {
  const ref = useRef(null);
  useLayoutEffect(() => {
    const el = ref.current;
    el.style.letterSpacing = "0px";
    const natural = el.getBoundingClientRect().height;
    el.style.letterSpacing = (w - natural) / el.textContent.length + "px";
  }, [w]);
  return <span ref={ref} className="mt-3 inline-block whitespace-nowrap text-[23px] leading-[26px] [writing-mode:vertical-rl]">{children}</span>;
}
const Handle = ({ className, w, children }) => (
  <div className={"absolute flex flex-col items-center border-2 border-[#dadada] bg-[#ededed] text-[#333] " + className}>
    <svg viewBox="0 0 14 18" className="-ml-1 h-[18px] w-[14px] shrink-0"><path d="M14 0v18L0 9z" fill="#333" /></svg>
    <VText w={w}>{children}</VText>
  </div>
);
const U = ({ children }) => <span className="underline decoration-2 underline-offset-1">{children}</span>;

function Canvas() {
  return (
    <div className="relative min-w-0 flex-1 bg-white">
      <Phylogram />
      <div className="absolute left-0 top-0 h-[120px] w-[1396px] rounded-br-[16px] border-b-2 border-r-2 border-t-2 border-[#d6d6d6] bg-[#efefef] text-[24px] text-[#4a4a4a]">
        <div className="absolute left-[586px] top-0 flex h-[28px] w-[180px] items-center justify-center gap-2 rounded-b-[16px] bg-[#ededed] text-[20px] tracking-[-1px] text-[#dedede]">
          <svg viewBox="0 0 16 16" className="h-4 w-4"><path d="M0 0h16L8 16z" fill="#dcdcdc" /></svg>TITLE
        </div>
        <div className="relative flex flex-col items-center pr-[43px]">
          <div className="flex h-[62px] items-center pt-[2px]"><Fit w={281} className="text-[53px] leading-[60px]">V jascida 52</Fit></div>
          <Fit w={1219} className="leading-[32px]">Items order: <b>Sequence composition (D: Euclidean; L: Ward)</b> | Current view: <b>blank_view</b> | Sample order: <b>custom</b></Fit>
        </div>
        <FatX className="absolute right-[2px] top-[3px] h-[22px] w-[22px] text-[#858585]" />
      </div>
      <div className="absolute right-6 top-6 flex h-[197px] w-[600px] rounded-[6px] bg-[#be675d] text-[24px] leading-[34.3px] text-white shadow-[0_0_24px_rgba(0,0,0,0.4)]">
        <div className="ml-[31px] mt-[75px] w-[46px]"><IcShield /></div>
        <div className="ml-[23px] mt-[31px] flex flex-col items-start">
          <Fit w={414}>It seems the server that's been serving</Fit>
          <Fit w={404}>this page is no longer accessible. You</Fit>
          <Fit w={415}>may lose your unsaved changes in this</Fit>
          <Fit w={88}>window.</Fit>
        </div>
        <FatX className="ml-auto mr-[18px] mt-[40px] h-6 w-6 text-[#f2dfdc]" />
      </div>
      <Handle className="-left-[2px] top-[1035px] h-[178px] w-[32px] rounded-r-[18px] border-l-0 pt-[26px]" w={106}><U>S</U>ETTINGS</Handle>
      <Handle className="right-0 top-[884px] h-[240px] w-[30px] rounded-l-[20px] pt-[36px]" w={145}>DESCRIPTIO<U>N</U></Handle>
      <Handle className="right-0 top-[1144px] h-[180px] w-[30px] rounded-l-[20px] pt-[36px]" w={81}><U>M</U>OUSE</Handle>
    </div>
  );
}

export default function App() {
  return (
    <div className="h-[2694px] w-[3536px] overflow-hidden bg-[#fefefe] pl-[112px] pt-[76px] font-[Inter,'Noto_Sans_CJK_KR',sans-serif]">
      <div className="flex h-[2470px] w-[3312px] flex-col overflow-hidden rounded-[20px] shadow-[0_48px_100px_rgba(0,0,0,0.4),0_0_2px_1px_rgba(0,0,0,0.35)]">
        <TabStrip />
        <Toolbar />
        <Bookmarks />
        <div className="flex min-h-0 flex-1 bg-white font-['Liberation_Sans',Arial,sans-serif]">
          <SettingsPanel />
          <Canvas />
        </div>
      </div>
    </div>
  );
}
